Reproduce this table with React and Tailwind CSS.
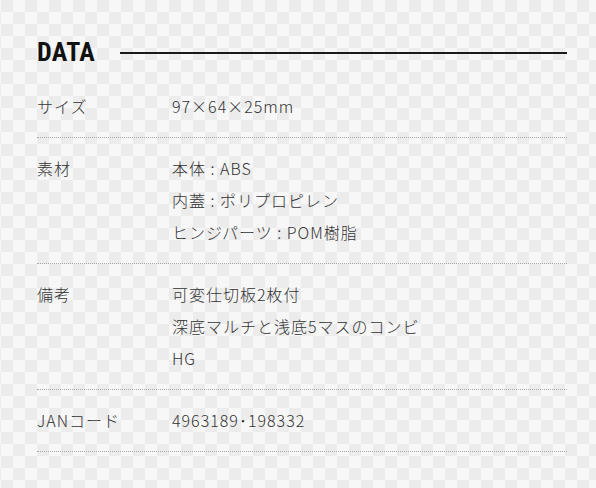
const specs = [
  { label: 'サイズ', values: ['97×64×25mm'] },
  { label: '素材', values: ['本体 : ABS', '内蓋 : ポリプロピレン', 'ヒンジパーツ : POM樹脂'] },
  { label: '備考', values: ['可変仕切板2枚付', '深底マルチと浅底5マスのコンビ', 'HG'] },
  { label: 'JANコード', values: ['4963189･198332'] },
];

const SpecRow = ({ label, values }) => {
  return (
    <div className="flex pt-[14px] pb-[15px] border-b border-dotted border-[#a8a8a8]">
      <div className="w-[135px] shrink-0 leading-[32px]">{label}</div>
      <div className="flex flex-col">
        {values.map((v) => (
          <div key={v} className="leading-[32px] whitespace-nowrap">
            {v}
          </div>
        ))}
      </div>
    </div>
  );
};

export default function App() {
  return (
    <div className="w-[596px] h-[488px] overflow-hidden bg-[#f2f2f2] bg-[image:conic-gradient(#f7f7f7_25%,#ececec_0_50%,#f7f7f7_0_75%,#ececec_0)] bg-size-[24px_24px] bg-position-[1px_0px]">
      <div className="pl-[37px] pr-[29px] pt-[38px]">
        {/* Heading */}
        <div className="flex items-center h-[28px] mb-[10px]">
          <h2 className="font-['Liberation_Sans_Narrow','Roboto',sans-serif] font-bold text-[26px] leading-none text-[#111] tracking-[0.4px] [font-stretch:condensed]">
            DATA
          </h2>
          <div className="flex-1 ml-[25px] h-[2px] bg-[#1a1a1a] mt-[1px]" />
        </div>

        {/* Spec table */}
        <div className="font-['Noto_Sans_CJK_JP',sans-serif] font-light text-[16px] tracking-[1px] text-[#333]">
          {specs.map((s) => (
            <SpecRow key={s.label} label={s.label} values={s.values} />
          ))}
        </div>
      </div>
    </div>
  );
}
